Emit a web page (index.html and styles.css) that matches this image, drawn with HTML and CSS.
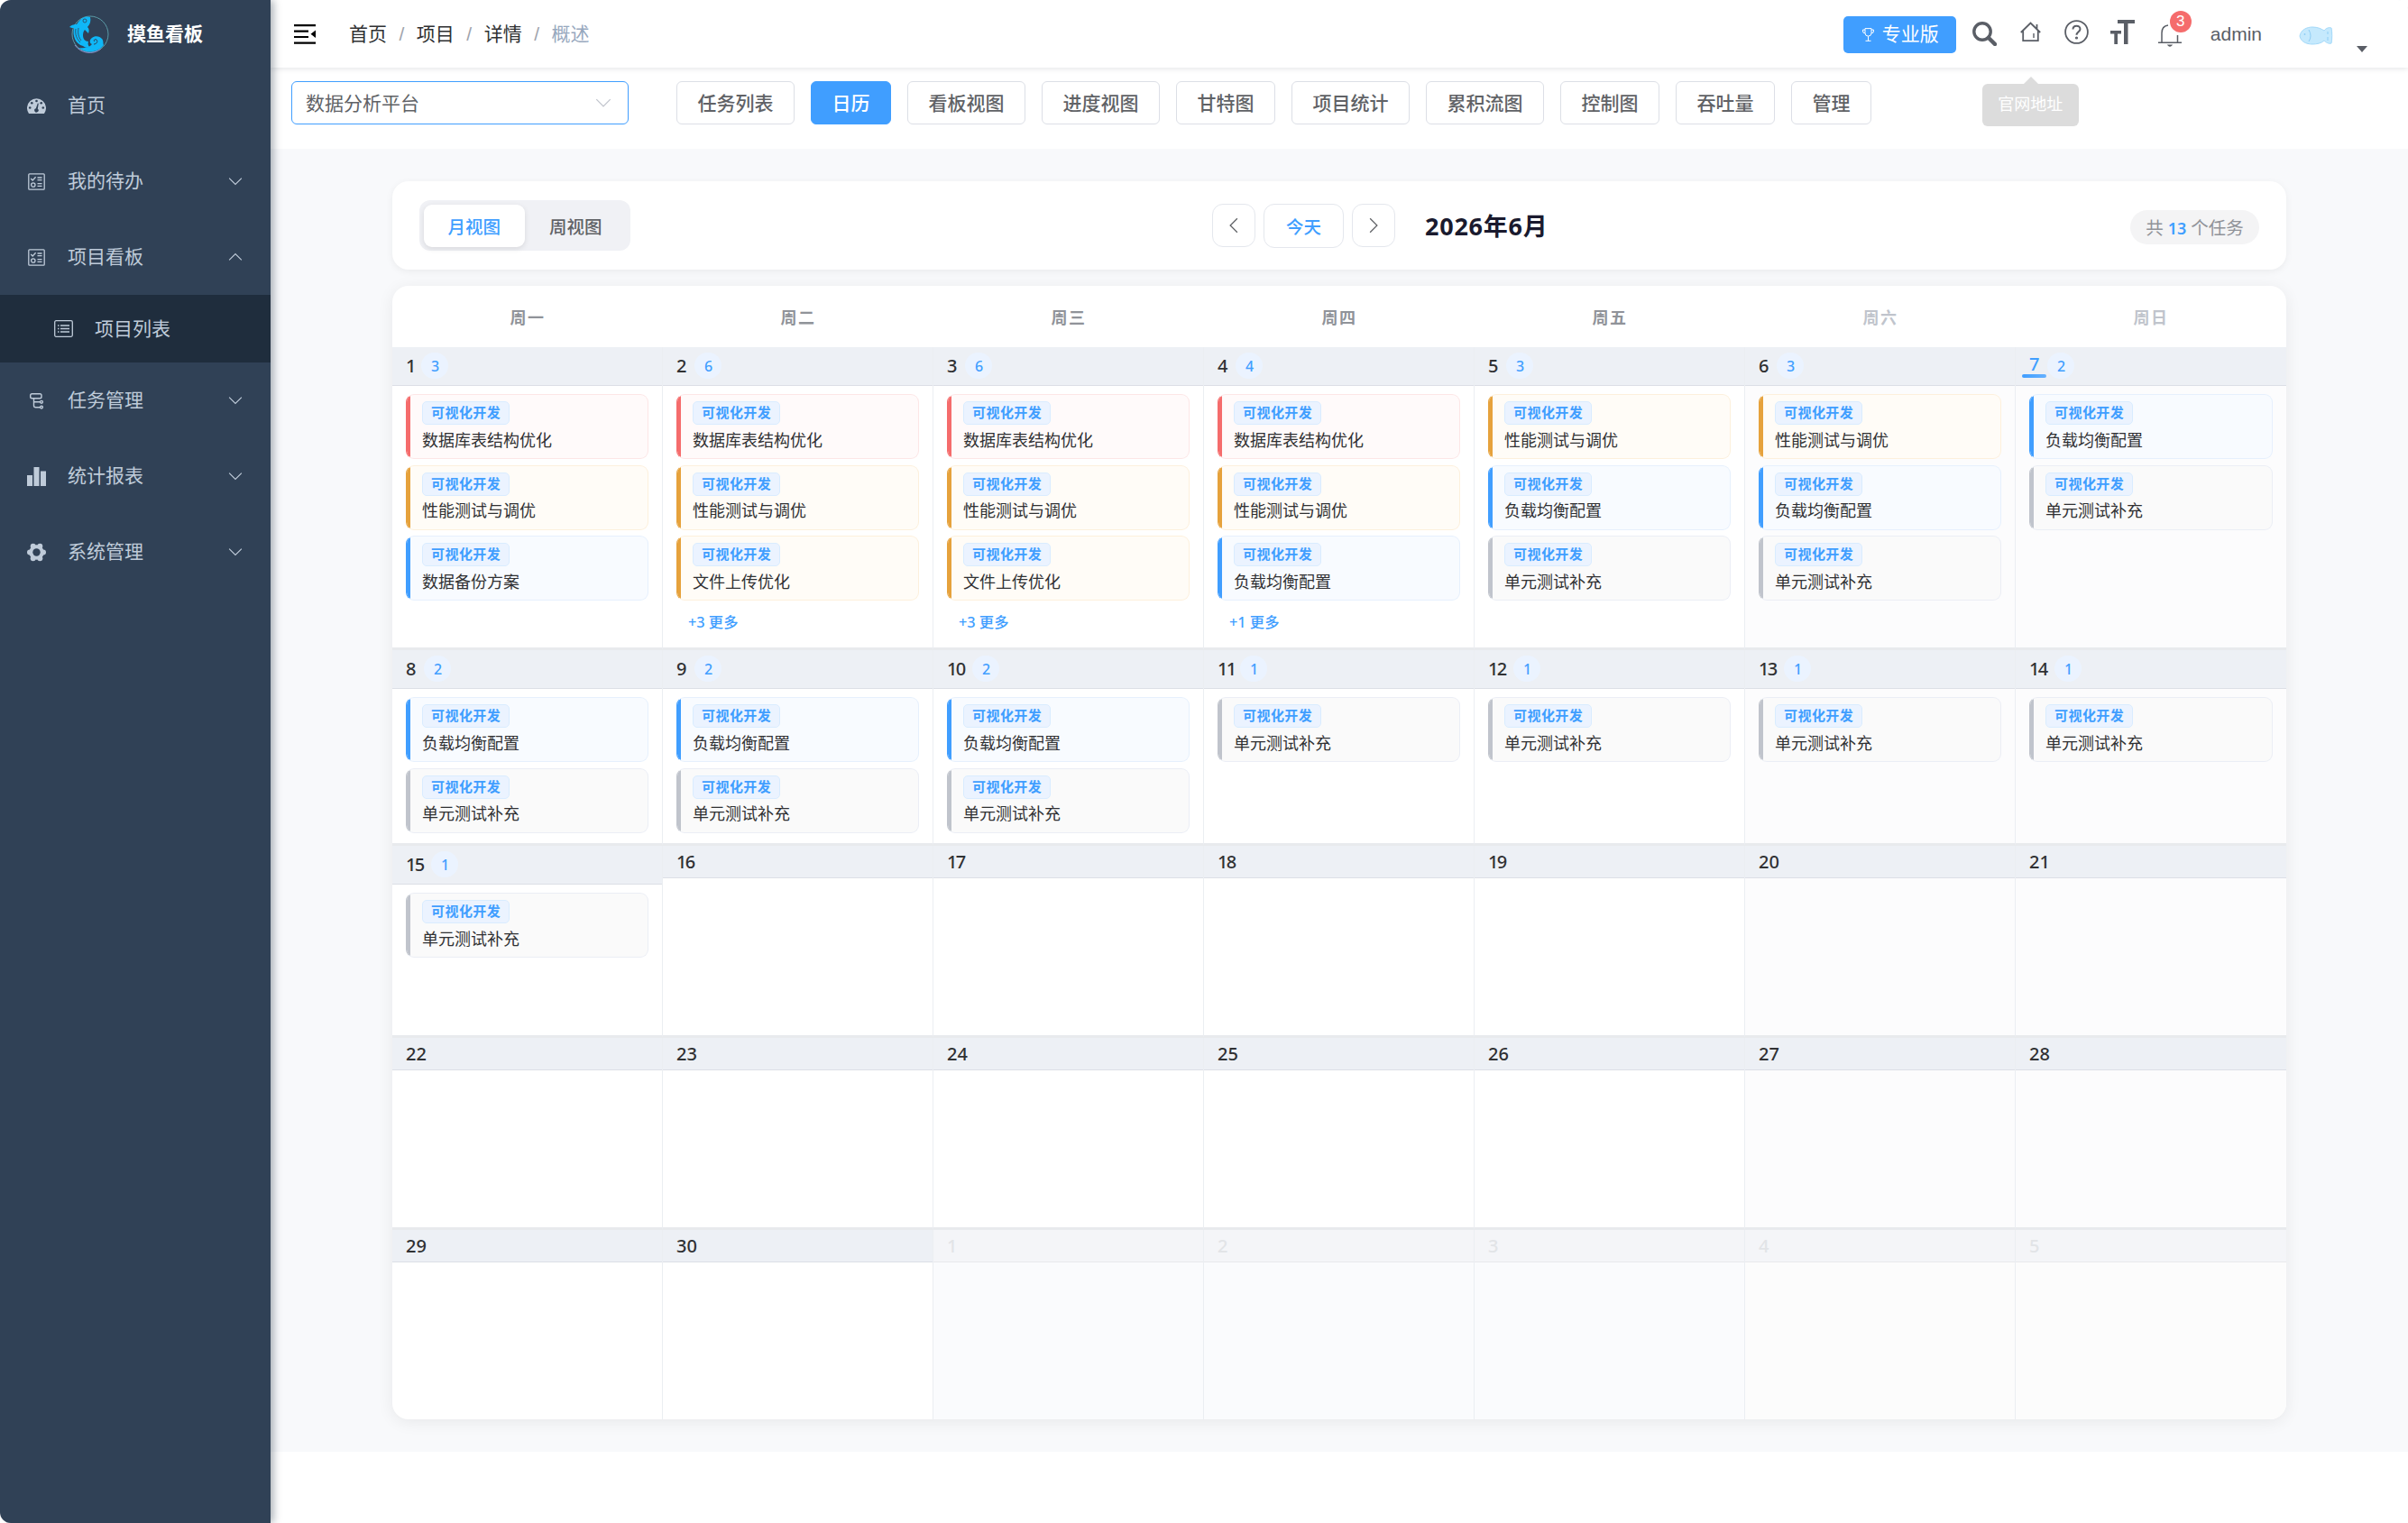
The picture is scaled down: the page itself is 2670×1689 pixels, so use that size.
FILE: index.html
```html
<!DOCTYPE html>
<html lang="zh-CN">

<head>
    <title>摸鱼看板</title>

    <meta charset="UTF-8">
    <meta name="viewport" content="width=device-width, initial-scale=1.0">

    <link rel="stylesheet" href="styles.css">
</head>

<body>
    <svg class="symbols" width="0" height="0">
        <symbol id="icon-down" viewBox="0 0 14 14">
            <path d="M1 4l6 6 6-6" fill="none" stroke="currentColor" stroke-width="1"/>
        </symbol>
        <symbol id="icon-todo" viewBox="0 0 19 19">
            <g fill="none" stroke="currentColor" stroke-width="1.3">
                <rect x=".8" y=".8" width="17.4" height="17.4" rx="1"/>
                <path d="M3.2 6l2 2 3.4-3.8M10.5 5h5M10.5 7.6h5M10.5 11.6h5M10.5 14.4h5"/>
                <circle cx="5.8" cy="13" r="2.2"/>
            </g>
        </symbol>
    </svg>

    <div class="app">
        <aside class="sidebar">
            <div class="logo">
                <svg class="logo-img" width="44" height="42" viewBox="0 0 44 42">
                    <circle cx="23" cy="21" r="20" fill="none" stroke="#5b9aa6" stroke-width="1"/>
                    <path d="M6 33a20 20 0 0 0 29 4" fill="none" stroke="#8c8cc8" stroke-width="1"/>
                    <path d="M23 2c-5-2-11 1-15 8-2 0-5 0-8 3 2 1 4 1 5 1-2 9 2 18 10 20 1 1 5 3 7 1-1-2-2-3-1-6-4 0-6-3-6-7 0-3 1-5 2-6l4 4c1-3 1-5-1-7 3-3 4-7 3-11z" fill="#0fb7f7"/>
                    <path d="M7 15c-1 6 1 11 5 15M10 14c-1 6 0 10 3 14" fill="none" stroke="#304156" stroke-width=".8"/>
                    <circle cx="17" cy="6" r="2" fill="none" stroke="#304156" stroke-width=".8"/>
                    <path d="M10 36c6 1 12 0 15-4-3-1-3-5 0-7 3-3 9-2 11 1 2 2 1 5 2 7-5 7-17 11-28 3z" fill="#0fb7f7"/>
                    <path d="M27 32c3 0 5-3 3-5-2-1-4 1-2 2" fill="none" stroke="#304156" stroke-width="1"/>
                </svg>
                <h1>摸鱼看板</h1>
            </div>
            <ul class="menu">
                <li class="menu-item">
                    <svg class="menu-icon" viewBox="0 0 21 17">
                        <path d="M2 17A10.5 10.5 0 1 1 19 17z" fill="currentColor"/>
                        <g fill="#304156">
                            <circle cx="3.2" cy="10.5" r="1.3"/><circle cx="5.3" cy="5.3" r="1.3"/><circle cx="10.5" cy="3" r="1.3"/><circle cx="15.7" cy="5.3" r="1.3"/><circle cx="17.8" cy="10.5" r="1.3"/>
                            <path d="M11.8 5.4l1 .3-1 6a2.2 2.2 0 1 1-2-.4z"/>
                        </g>
                    </svg>
                    <span>首页</span>
                </li>
                <li class="menu-item">
                    <svg class="menu-icon menu-icon--sm"><use href="#icon-todo"/></svg>
                    <span>我的待办</span>
                    <svg class="menu-arrow"><use href="#icon-down"/></svg>
                </li>
                <li class="menu-item">
                    <svg class="menu-icon menu-icon--sm"><use href="#icon-todo"/></svg>
                    <span>项目看板</span>
                    <svg class="menu-arrow menu-arrow--open"><use href="#icon-down"/></svg>
                </li>
                <li class="menu-item menu-item--sub">
                    <svg class="menu-icon" viewBox="0 0 21 19">
                        <rect x=".7" y=".7" width="19.6" height="17.6" rx="1.5" fill="none" stroke="currentColor" stroke-width="1.3"/>
                        <path d="M4 6h1.5M7 6h10M4 9.5h1.5M7 9.5h10M4 13h1.5M7 13h10" stroke="currentColor" stroke-width="1.3"/>
                    </svg>
                    <span>项目列表</span>
                </li>
                <li class="menu-item">
                    <svg class="menu-icon" viewBox="0 0 21 21">
                        <g fill="none" stroke="currentColor" stroke-width="1.4">
                            <rect x="3.7" y="2.7" width="12.3" height="5" rx="1.8"/>
                            <path d="M7.5 7.7v8q0 2 2 2H15M7.5 11.8H15"/>
                            <circle cx="16" cy="11.8" r="1.4"/><circle cx="16" cy="17.6" r="1.4"/>
                        </g>
                    </svg>
                    <span>任务管理</span>
                    <svg class="menu-arrow"><use href="#icon-down"/></svg>
                </li>
                <li class="menu-item">
                    <svg class="menu-icon" viewBox="0 0 21 21">
                        <path d="M0 9h6v12H0zM7.5 0h6v21h-6zM15 4.5h6V21h-6z" fill="currentColor"/>
                    </svg>
                    <span>统计报表</span>
                    <svg class="menu-arrow"><use href="#icon-down"/></svg>
                </li>
                <li class="menu-item">
                    <svg class="menu-icon" viewBox="0 0 21 21" fill="currentColor">
                        <circle cx="10.5" cy="10.5" r="8.2"/>
                        <circle cx="18" cy="10.5" r="3"/><circle cx="14.3" cy="3.7" r="3"/><circle cx="6.7" cy="3.7" r="3"/>
                        <circle cx="3" cy="10.5" r="3"/><circle cx="6.7" cy="17.3" r="3"/><circle cx="14.3" cy="17.3" r="3"/>
                        <circle cx="10.5" cy="10.5" r="4.2" fill="#304156"/>
                    </svg>
                    <span>系统管理</span>
                    <svg class="menu-arrow"><use href="#icon-down"/></svg>
                </li>
            </ul>
        </aside>

        <div class="main">
            <header class="navbar">
                <svg class="hamburger" width="24" height="22" viewBox="0 0 24 22">
                    <path d="M0 1.2h24M0 7.7h16M0 14h16M0 20.6h24" stroke="#000" stroke-width="2.2"/>
                    <path d="M24 6.5V15l-5.5-4.2z"/>
                </svg>
                <nav class="breadcrumb">
                    <a>首页</a><i>/</i><a>项目</a><i>/</i><a>详情</a><i>/</i><span>概述</span>
                </nav>
                <div class="right-menu">
                    <button class="btn-pro">
                        <svg width="13" height="15" viewBox="0 0 13 15" fill="none" stroke="#fff">
                            <path d="M3 .6h7v5a3.5 3.5 0 0 1-7 0zM3 2H.6v2q0 1.8 2.4 1.8M10 2h2.4v2q0 1.8-2.4 1.8M6.500 9.200V14M3.500 14.300h6"/>
                        </svg>
                        <span>专业版</span>
                    </button>
                    <svg class="tool tool--search" width="27" height="27" viewBox="0 0 27 27" fill="none" stroke="#5a5e66">
                        <circle cx="11" cy="11" r="9.2" stroke-width="3.4"/>
                        <path d="M18 18l7 7" stroke-width="4.5" stroke-linecap="round"/>
                    </svg>
                    <div class="home-link">
                        <svg class="tool" width="23" height="23" viewBox="0 0 23 23" fill="none" stroke="#5a5e66" stroke-width="1.8">
                            <path d="M.8 12L11.5 1.5 22.2 12M3.2 10v11.200h16.600V10M18.500 8.500V3"/>
                            <path d="M15 13v5" stroke-width="1.4"/>
                        </svg>
                        <div class="tooltip">官网地址</div>
                    </div>
                    <svg class="tool" width="27" height="27" viewBox="0 0 27 27" fill="none" stroke="#5a5e66" stroke-width="1.8">
                        <circle cx="13.5" cy="13.5" r="12.4"/>
                        <path d="M9.5 10.5c0-5 8-5 8-.3 0 3-4 3-4 6.6" stroke-width="2"/>
                        <circle cx="13.5" cy="20" r=".7"/>
                    </svg>
                    <svg class="tool" width="27" height="27" viewBox="0 0 27 27" fill="#5a5e66">
                        <path d="M8 0h19v4h-7.5v23H15V4H8zM0 12h12v3.500H8V27H4.300V15.500H0z"/>
                    </svg>
                    <div class="bell">
                        <svg width="26" height="25" viewBox="0 0 26 25" fill="none" stroke="#5a5e66" stroke-width="1.5">
                            <path d="M0 20.3h26M4 20V9.500Q4 2 11 1M21.500 20v-8"/>
                            <path d="M11.5 23.200q1.500 1.600 3 0z"/>
                        </svg>
                        <sup>3</sup>
                    </div>
                    <span class="user-name">admin</span>
                    <svg class="avatar" width="38" height="21" viewBox="0 0 38 21">
                        <path d="M1 11C2 4 9 1 15 1c6 0 10 2 13 4 2-3 6-4 8-3 1 4 1 13 0 17-3 1-6-1-8-3-3 3-8 4-13 4C8 20 2 17 1 11z" fill="#c5e9fd" stroke="#a3d8f8"/>
                        <path d="M11 4q4 7 0 13M32 6v3M32 12v4" fill="none" stroke="#8ecdf5"/>
                        <circle cx="6.5" cy="9" r=".9" fill="#8ecdf5"/>
                    </svg>
                    <i class="caret"></i>
                </div>
            </header>

            <div class="project-bar">
                <div class="select">
                    <span>数据分析平台</span>
                    <svg width="18" height="18"><use href="#icon-down"/></svg>
                </div>
                <div class="tabs">
                    <button>任务列表</button>
                    <button class="active">日历</button>
                    <button>看板视图</button>
                    <button>进度视图</button>
                    <button>甘特图</button>
                    <button>项目统计</button>
                    <button>累积流图</button>
                    <button>控制图</button>
                    <button>吞吐量</button>
                    <button>管理</button>
                </div>
            </div>

            <section class="content">
                <div class="toolbar">
                    <div class="view-switch">
                        <span class="active">月视图</span>
                        <span>周视图</span>
                    </div>
                    <div class="date-nav">
                        <button class="nav-btn nav-btn--prev"><svg width="18" height="18"><use href="#icon-down"/></svg></button>
                        <button class="nav-btn nav-btn--today">今天</button>
                        <button class="nav-btn nav-btn--next"><svg width="18" height="18"><use href="#icon-down"/></svg></button>
                        <h2>2026年6月</h2>
                    </div>
                    <span class="total">共 <b>13</b> 个任务</span>
                </div>

                <div class="calendar">
                    <div class="week-head">
                        <span>周一</span>
                        <span>周二</span>
                        <span>周三</span>
                        <span>周四</span>
                        <span>周五</span>
                        <span class="weekend">周六</span>
                        <span class="weekend">周日</span>
                    </div>
                    <div class="days" id="days"></div>
                </div>
            </section>
        </div>
    </div>
    <script src="calendar.js"></script>
</body>

</html>
```
FILE: styles.css
```css
* {
    box-sizing: border-box;
}

body {
    margin: 0;
    background-color: #fff;
    font-family: "Liberation Sans", "Noto Sans CJK SC", sans-serif;
    font-size: 21px;
    color: #303133;
}

button {
    font-family: inherit;
    cursor: pointer;
}

.symbols {
    position: absolute;
}

.app {
    display: flex;
    height: 1689px;
    border-radius: 12px;
    overflow: hidden;
}

/* sidebar */
.sidebar {
    position: relative;
    z-index: 2;
    flex: none;
    width: 300px;
    background-color: #304156;
    box-shadow: 3px 0 9px rgba(0, 21, 41, .35);
}

.logo {
    display: flex;
    align-items: center;
    height: 75px;
    padding-left: 77px;
}

.logo h1 {
    margin: 0 0 0 20px;
    font-size: 21px;
    line-height: 30px;
    font-weight: bold;
    color: #fff;
}

.menu {
    margin: 0;
    padding: 0;
    list-style: none;
}

.menu-item {
    display: flex;
    align-items: center;
    height: 84px;
    padding: 0 31px 0 30px;
    color: #bfcbd9;
}

.menu-item span {
    margin-left: 24px;
    line-height: 30px;
}

.menu-item--sub {
    height: 75px;
    padding-left: 60px;
    background-color: #1f2d3d;
}

.menu-icon {
    width: 21px;
    height: 21px;
}

.menu-icon--sm {
    padding: 1px;
}

.menu-arrow {
    width: 16px;
    height: 16px;
    margin-left: auto;
}

.menu-arrow--open {
    transform: rotate(180deg);
}

/* navbar */
.main {
    flex: 1;
    min-width: 0;
}

.navbar {
    position: relative;
    z-index: 1;
    display: flex;
    align-items: center;
    height: 75px;
    padding: 0 45px 0 26px;
    background-color: #fff;
    box-shadow: 0 1px 6px rgba(0, 21, 41, .12);
}

.breadcrumb {
    display: flex;
    margin-left: 37px;
    line-height: 30px;
    color: #303133;
}

.breadcrumb i {
    margin: 0 13.5px;
    font-style: normal;
    color: #a0a4ac;
}

.breadcrumb span {
    color: #97a8be;
}

.right-menu {
    display: flex;
    align-items: center;
    margin-left: auto;
    height: 75px;
}

.btn-pro {
    display: flex;
    align-items: center;
    gap: 9px;
    width: 125px;
    height: 41px;
    margin: 2px 18px 0 0;
    padding: 0 0 0 21px;
    border: none;
    border-radius: 5px;
    background-color: #409eff;
    font-size: 21px;
    line-height: 30px;
    white-space: nowrap;
    color: #fff;
}

.btn-pro span {
    padding-bottom: 1px;
}

.tool {
    display: block;
    margin: -4px 24px 0 0;
}

.tool--search {
    margin-top: 0;
    margin-right: 26px;
}

.home-link {
    position: relative;
}

.home-link .tool {
    margin-right: 26px;
}

.tooltip {
    position: absolute;
    top: 65px;
    left: -42px;
    width: 107px;
    height: 47px;
    border-radius: 6px;
    background-color: #dcdcdc;
    font-size: 18px;
    line-height: 46px;
    text-align: center;
    color: #fff;
}

.tooltip::before {
    content: "";
    position: absolute;
    top: -8px;
    left: 45px;
    border: 9px solid transparent;
    border-top: none;
    border-bottom-color: #dcdcdc;
}

.bell {
    position: relative;
    height: 25px;
    margin: 3px 0 0 2px;
}

.bell svg {
    display: block;
}

.bell sup {
    position: absolute;
    top: -15px;
    left: 13px;
    width: 24px;
    height: 24px;
    border-radius: 12px;
    background-color: #f56c6c;
    font-size: 17px;
    line-height: 24px;
    text-align: center;
    color: #fff;
}

.user-name {
    margin-left: 32px;
    color: #5a5e66;
}

.avatar {
    margin: 3px 0 0 41px;
}

.caret {
    margin: 34px 0 0 26px;
    border: 6px solid transparent;
    border-top: 7px solid #5a5e66;
    border-bottom: none;
}

/* project bar */
.project-bar {
    display: flex;
    height: 90px;
    padding: 15px 23px;
    background-color: #fff;
}

.select {
    display: flex;
    align-items: center;
    justify-content: space-between;
    width: 374px;
    height: 48px;
    padding: 0 18px 0 15px;
    border: 1.5px solid #409eff;
    border-radius: 6px;
    color: #606266;
}

.select span {
    padding-bottom: 2px;
}

.select svg {
    color: #c0c4cc;
}

.tabs {
    display: flex;
    gap: 18px;
    margin-left: 53px;
}

.tabs button {
    height: 48px;
    padding: 0 22.5px 3px;
    border: 1px solid #dcdfe6;
    border-radius: 6px;
    background-color: #fff;
    font-size: 21px;
    font-weight: 500;
    color: #606266;
}

.tabs button.active {
    border-color: #409eff;
    background-color: #409eff;
    color: #fff;
}

/* content */
.content {
    height: 1445px;
    padding: 36px 135px;
    background-color: #f8f9fb;
    font-family: "Noto Sans", "Noto Sans CJK SC", sans-serif;
}

.toolbar {
    display: flex;
    align-items: center;
    justify-content: space-between;
    height: 98px;
    padding: 0 30px;
    border-radius: 18px;
    background-color: #fff;
    box-shadow: 0 2px 8px rgba(0, 0, 0, .06);
}

.view-switch {
    display: flex;
    width: 234px;
    height: 56px;
    padding: 4.5px;
    border-radius: 12px;
    background-color: #f0f1f5;
}

.view-switch span {
    flex: 1;
    border-radius: 9px;
    font-size: 19.5px;
    font-weight: 500;
    line-height: 49px;
    text-align: center;
    color: #606266;
}

.view-switch .active {
    background-color: #fff;
    box-shadow: 0 2px 6px rgba(0, 0, 0, .1);
    color: #409eff;
}

.date-nav {
    display: flex;
    align-items: center;
    gap: 9px;
}

.nav-btn {
    display: flex;
    align-items: center;
    justify-content: center;
    width: 48px;
    height: 48px;
    padding: 0;
    border: 1px solid #e4e7ed;
    border-radius: 12px;
    background-color: #fff;
    color: #606266;
}

.nav-btn--prev svg {
    transform: rotate(90deg);
}

.nav-btn--next svg {
    transform: rotate(-90deg);
}

.nav-btn--today {
    width: 89px;
    height: 49px;
    font-size: 19.5px;
    font-weight: 500;
    color: #409eff;
}

.date-nav h2 {
    width: 137px;
    margin: 2px 0 0 24px;
    font-size: 27px;
    line-height: 36px;
    letter-spacing: .75px;
    white-space: nowrap;
    color: #1a1a2e;
}

.total {
    width: 143px;
    height: 38px;
    margin-top: 4px;
    border-radius: 19px;
    background-color: #f4f4f5;
    font-size: 19.5px;
    line-height: 40px;
    text-align: center;
    white-space: nowrap;
    color: #909399;
}

.total b {
    font-size: 18px;
    font-weight: 600;
    color: #409eff;
}

/* calendar */
.calendar {
    margin-top: 18px;
    border-radius: 18px;
    background-color: #fff;
    box-shadow: 0 3px 18px rgba(0, 0, 0, .07);
    overflow: hidden;
}

.week-head {
    display: grid;
    grid-template-columns: repeat(7, 1fr);
    height: 68px;
    font-size: 18px;
    font-weight: 700;
    line-height: 71px;
    letter-spacing: 1.5px;
    text-align: center;
    color: #909399;
}

.week-head .weekend {
    color: #c0c4cc;
}

.days {
    display: grid;
    grid-template-columns: repeat(7, 1fr);
    grid-template-rows: 336px 217px 213px 213px 210px;
}

.day {
    border-right: 1px solid #ebeef2;
    border-bottom: 3px solid #e8eaed;
}

.day:nth-child(7n) {
    border-right: none;
}

.day:nth-child(n+29) {
    border-bottom: none;
}

.day--weekend {
    background-color: #fcfcfd;
}

.day-head {
    display: flex;
    align-items: center;
    gap: 9px;
    height: 36px;
    padding: 0 15px;
    border-bottom: 1px solid #dcdfe6;
    background-color: #edf0f5;
}

.day-head--busy {
    height: 43px;
    padding-bottom: 2px;
}

.num {
    font-size: 20px;
    font-weight: 500;
    line-height: 28px;
}

.day-head--busy .num {
    padding-top: 2px;
}

/* digits that start with 1 are set tighter */
.num--teen {
    letter-spacing: -1.7px;
}

.num--one {
    margin-right: -3px;
}

.day--today .num {
    position: relative;
    top: -2px;
    color: #409eff;
}

.day--today .num::after {
    content: "";
    position: absolute;
    left: -8px;
    right: -8px;
    bottom: -1px;
    height: 4px;
    border-radius: 2px;
    background: linear-gradient(90deg, #409eff, #66b1ff);
}

.count {
    min-width: 30px;
    height: 29px;
    border-radius: 15px;
    background-color: #ebf3ff;
    font-size: 16px;
    font-weight: 500;
    line-height: 31px;
    text-align: center;
    color: #409eff;
}

.day-body {
    display: flex;
    flex-direction: column;
    gap: 6.7px;
    padding: 9px 15px;
}

.task {
    position: relative;
    display: flex;
    flex-direction: column;
    align-items: flex-start;
    height: 72px;
    padding: 7px 17px;
    border: 1px solid #ebeef5;
    border-radius: 9px;
    background-color: #fafafa;
    overflow: hidden;
}

.task::before {
    content: "";
    position: absolute;
    top: 0;
    bottom: 0;
    left: 0;
    width: 4px;
    background-color: #c0c4cc;
}

.task--gray {
    border-left-color: #c0c4cc;
}

.task--red {
    border-color: #fde6e6;
    border-left-color: #f56c6c;
    background-color: #fffafa;
}

.task--red::before {
    background-color: #f56c6c;
}

.task--orange {
    border-color: #fdf0dc;
    border-left-color: #e6a23c;
    background-color: #fffcf7;
}

.task--orange::before {
    background-color: #e6a23c;
}

.task--blue {
    border-color: #e6f0fd;
    border-left-color: #409eff;
    background-color: #f8fbff;
}

.task--blue::before {
    background-color: #409eff;
}

.tag {
    height: 26px;
    padding: 0 9px;
    border: 1px solid #d9ecff;
    border-radius: 5px;
    background-color: #ebf3ff;
    font-size: 15px;
    font-weight: bold;
    line-height: 23px;
    letter-spacing: .45px;
    color: #409eff;
}

.task-title {
    margin-top: 3.5px;
    font-size: 18px;
    line-height: 26px;
    white-space: nowrap;
}

.more {
    padding: 0 13px;
    font-size: 16.3px;
    font-weight: 500;
    line-height: 34px;
    color: #409eff;
}

.day--other {
    background-color: #fafbfd;
}

.day--other.day--weekend {
    background-color: #fcfcfc;
}

.day--other .day-head {
    border-bottom-color: #e8e9ec;
    background-color: #f4f5f8;
}

.day--other .num {
    color: #e2e4e7;
}
```
FILE: calendar.js
```js
const tasks = {
    db: { title: '数据库表结构优化', level: 'red' },
    perf: { title: '性能测试与调优', level: 'orange' },
    upload: { title: '文件上传优化', level: 'orange' },
    backup: { title: '数据备份方案', level: 'blue' },
    balance: { title: '负载均衡配置', level: 'blue' },
    unit: { title: '单元测试补充', level: 'gray' }
};

// tasks shown per day, total is only set when some are folded
const schedule = {
    1: { list: ['db', 'perf', 'backup'] },
    2: { list: ['db', 'perf', 'upload'], total: 6 },
    3: { list: ['db', 'perf', 'upload'], total: 6 },
    4: { list: ['db', 'perf', 'balance'], total: 4 },
    5: { list: ['perf', 'balance', 'unit'] },
    6: { list: ['perf', 'balance', 'unit'] },
    7: { list: ['balance', 'unit'] },
    8: { list: ['balance', 'unit'] },
    9: { list: ['balance', 'unit'] },
    10: { list: ['balance', 'unit'] },
    11: { list: ['unit'] },
    12: { list: ['unit'] },
    13: { list: ['unit'] },
    14: { list: ['unit'] },
    15: { list: ['unit'] }
};

const today = 7;
const daysInMonth = 30;

function renderTask(key) {
    const { title, level } = tasks[key];
    return `<div class="task task--${level}"><span class="tag">可视化开发</span><span class="task-title">${title}</span></div>`;
}

function renderDay(index) {
    const other = index > daysInMonth;
    const date = other ? index - daysInMonth : index;
    const plan = other ? null : schedule[index];

    let classes = 'day';
    if (other) classes += ' day--other';
    if (index % 7 === 6 || index % 7 === 0) classes += ' day--weekend';
    if (index === today) classes += ' day--today';

    let numClass = 'num';
    if (date >= 10 && date < 20) numClass += ' num--teen';
    if (date === 1 || date === 11) numClass += ' num--one';

    let head = `<span class="${numClass}">${date}</span>`;
    let body = '';

    if (plan) {
        const total = plan.total || plan.list.length;
        head += `<span class="count">${total}</span>`;
        body = plan.list.map(renderTask).join('');
        if (total > plan.list.length) {
            body += `<span class="more">+${total - plan.list.length} 更多</span>`;
        }
    }

    return `<div class="${classes}">
        <div class="day-head${plan ? ' day-head--busy' : ''}">${head}</div>
        <div class="day-body">${body}</div>
    </div>`;
}

let html = '';
for (let i = 1; i <= 35; i++) {
    html += renderDay(i);
}
document.getElementById('days').innerHTML = html;
```
